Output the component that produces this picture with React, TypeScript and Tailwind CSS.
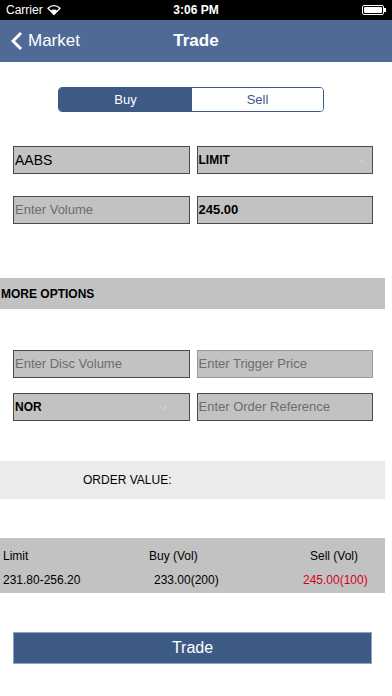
import React from "react";

const font = { fontFamily: '"Liberation Sans", Arial, sans-serif' };

const Field = ({
  text,
  placeholder,
  select,
  chevronAt,
  light,
}: {
  text?: string;
  placeholder?: string;
  select?: boolean;
  chevronAt?: string;
  light?: boolean;
}) => (
  <div
    className={`relative h-[28px] flex items-center bg-[#c2c2c2] border ${
      light ? "border-[#9a9a9a]" : "border-[#4a4a4a]"
    } px-[1px] text-[13px]`}
  >
    {text ? (
      <span className={`text-black ${select ? "font-bold text-[12px]" : "text-[14px]"}`}>{text}</span>
    ) : (
      <span className="text-[#6d6d6d]">{placeholder}</span>
    )}
    {select && (
      <svg
        className={`absolute top-[11px] ${chevronAt}`}
        width="8"
        height="5"
        viewBox="0 0 8 5"
        fill="none"
      >
        <path d="M1 1l3 3 3-3" stroke="#d8d8d8" strokeWidth="1" />
      </svg>
    )}
  </div>
);

const App = () => (
  <div className="w-[392px] h-[696px] bg-white overflow-hidden" style={font}>
    {/* status bar */}
    <div className="h-[20px] bg-black text-white flex items-center justify-between px-[6px] text-[12px]">
      <div className="flex items-center gap-[4px] w-[100px]">
        <span>Carrier</span>
        <svg width="14" height="10" viewBox="0 0 14 10">
          <path d="M7 9.5L1 3.2a8.5 8.5 0 0 1 12 0z" fill="none" stroke="white" strokeWidth="1.3" />
          <path d="M7 9.5L3.6 6a4.8 4.8 0 0 1 6.8 0z" fill="white" />
        </svg>
      </div>
      <span className="font-bold">3:06 PM</span>
      <div className="w-[100px] flex justify-end">
        <div className="flex items-center">
          <div className="w-[22px] h-[10px] border border-white rounded-[2px] p-[1px]">
            <div className="w-full h-full bg-white rounded-[1px]" />
          </div>
          <div className="w-[1.5px] h-[4px] bg-white" />
        </div>
      </div>
    </div>

    {/* nav bar */}
    <div className="h-[42px] bg-[#4f6a95] relative flex items-center justify-center text-white">
      <div className="absolute left-[11px] top-0 h-full flex items-center gap-[5px]">
        <svg width="12" height="20" viewBox="0 0 12 20">
          <path d="M10 2L2 10l8 8" fill="none" stroke="white" strokeWidth="3" />
        </svg>
        <span className="text-[17px]">Market</span>
      </div>
      <span className="text-[17px] font-bold">Trade</span>
    </div>

    {/* segmented control */}
    <div className="mt-[25px] ml-[58px] w-[266px] h-[25px] flex border border-[#3d5a85] rounded-[4px] overflow-hidden text-[13px]">
      <div className="w-[133px] bg-[#3d5a85] text-white flex items-center justify-center">Buy</div>
      <div className="flex-1 bg-white text-[#3d5a85] flex items-center justify-center">Sell</div>
    </div>

    {/* inputs */}
    <div className="mt-[34px] pl-[13px] pr-[19px] grid grid-cols-2 gap-x-[7px]">
      <Field text="AABS" />
      <Field text="LIMIT" select chevronAt="right-[7px]" />
    </div>
    <div className="mt-[22px] pl-[13px] pr-[19px] grid grid-cols-2 gap-x-[7px]">
      <Field placeholder="Enter Volume" />
      <div className="relative h-[28px] flex items-center bg-[#c2c2c2] border border-[#4a4a4a] px-[1px] text-[13px] font-bold">
        245.00
      </div>
    </div>

    {/* more options */}
    <div className="mt-[54px] w-[385px] h-[31px] bg-[#c2c2c2] flex items-center pl-[1px] text-[12px] font-bold text-black">
      MORE OPTIONS
    </div>

    <div className="mt-[41px] pl-[13px] pr-[19px] grid grid-cols-2 gap-x-[7px]">
      <Field placeholder="Enter Disc Volume" />
      <Field placeholder="Enter Trigger Price" light />
    </div>
    <div className="mt-[15px] pl-[13px] pr-[19px] grid grid-cols-2 gap-x-[7px]">
      <Field text="NOR" select chevronAt="left-[145px]" />
      <Field placeholder="Enter Order Reference" />
    </div>

    {/* order value */}
    <div className="mt-[40px] w-[385px] h-[38px] bg-[#ebebeb] flex items-center pl-[83px] text-[12px] text-black">
      ORDER VALUE:
    </div>

    {/* limits table */}
    <div className="mt-[39px] w-[385px] h-[55px] bg-[#c2c2c2] text-[12px] text-black relative">
      <span className="absolute left-[3px] top-[9px]">Limit</span>
      <span className="absolute left-[149px] top-[9px]">Buy (Vol)</span>
      <span className="absolute left-[310px] top-[9px]">Sell (Vol)</span>
      <span className="absolute left-[3px] top-[33px]">231.80-256.20</span>
      <span className="absolute left-[154px] top-[33px]">233.00(200)</span>
      <span className="absolute left-[303px] top-[33px] text-[#d0021b]">245.00(100)</span>
    </div>

    {/* trade button */}
    <div className="mt-[39px] ml-[13px] w-[359px] h-[32px] bg-[#3d5a85] border border-[#8ea2c2] flex items-center justify-center text-white text-[16px]">
      Trade
    </div>
  </div>
);

export default App;
